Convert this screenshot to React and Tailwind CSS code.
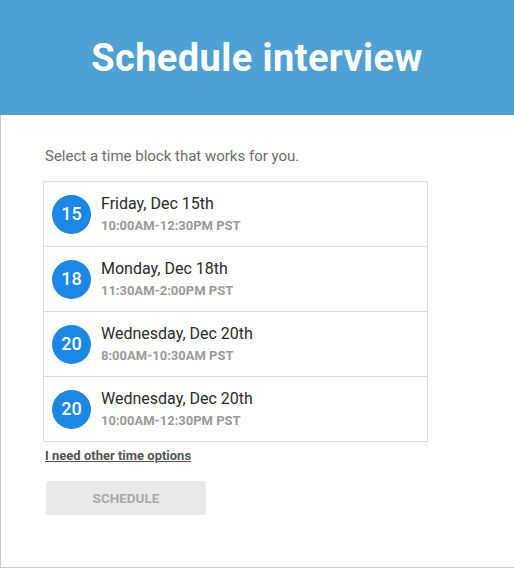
import React from "react";

const slots = [
  { day: "15", title: "Friday, Dec 15th", time: "10:00AM-12:30PM PST" },
  { day: "18", title: "Monday, Dec 18th", time: "11:30AM-2:00PM PST" },
  { day: "20", title: "Wednesday, Dec 20th", time: "8:00AM-10:30AM PST" },
  { day: "20", title: "Wednesday, Dec 20th", time: "10:00AM-12:30PM PST" },
];

const App = () => {
  return (
    <div className="w-[514px] h-[568px] bg-white font-['Roboto',sans-serif] overflow-hidden">
      <div className="h-[115px] bg-[#4fa1d3] flex items-center justify-center">
        <h1 className="text-white text-[38px] font-bold tracking-[0.4px] leading-none pt-[1px]">
          Schedule interview
        </h1>
      </div>
      <div className="h-[453px] border-l border-b border-[#c8c8c8] pl-[44px] pt-[31px]">
        <p className="text-[15px] text-[#6b6b6b] leading-[20px]">
          Select a time block that works for you.
        </p>
        <ul className="mt-[15px] -ml-[2px] w-[385px] border border-[#dcdcdc]">
          {slots.map((slot, i) => (
            <li
              key={i}
              className="h-[65px] first:h-[64px] flex items-center gap-[10px] pl-[8px] border-t border-[#dcdcdc] first:border-t-0"
            >
              <div className="w-[39px] h-[39px] rounded-full bg-[#1b87e6] flex items-center justify-center text-white text-[18px] font-medium leading-none">
                {slot.day}
              </div>
              <div className="flex flex-col">
                <span className="text-[16px] text-[#2a2a2a] leading-[20px]">
                  {slot.title}
                </span>
                <span className="text-[13px] font-bold text-[#9a9a9a] leading-[16px] mt-[4px]">
                  {slot.time}
                </span>
              </div>
            </li>
          ))}
        </ul>
        <a
          href="#"
          className="block mt-[6px] text-[13px] font-bold text-[#555] underline leading-[16px]"
        >
          I need other time options
        </a>
        <button
          type="button"
          className="mt-[17px] ml-[1px] w-[160px] h-[34px] rounded-[2px] bg-[#e9e9e9] text-[#a8a8a8] text-[13.5px] font-bold"
        >
          SCHEDULE
        </button>
      </div>
    </div>
  );
};

export default App;
